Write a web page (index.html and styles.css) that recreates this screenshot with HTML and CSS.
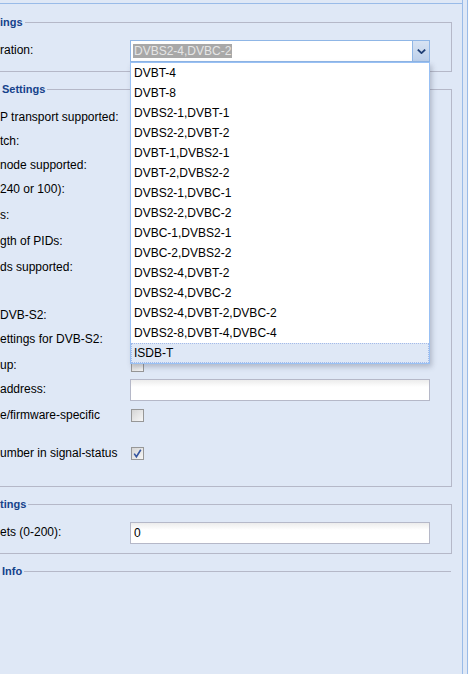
FILE: index.html
```html
<!DOCTYPE html>
<html>
<head>
<meta charset="utf-8">
<link rel="stylesheet" href="styles.css">
</head>
<body>
<div class="page">
  <div class="panel">
    <div class="panel-top"></div>
    <div class="panel-body">

      <div class="fs">
        <div class="fs-head"><span class="legend">ings</span><span class="rule"></span></div>
        <div class="fs-body pad-s">
          <div class="row tf">
            <div class="lbl">ration:</div>
            <div class="combo">
              <div class="combo-text"><span class="sel">DVBS2-4,DVBC-2</span></div>
              <div class="trigger">
                <svg width="9" height="5" viewBox="0 0 9 5"><path d="M0.8 0.6 L4.5 4.1 L8.2 0.6" fill="none" stroke="#1f3f75" stroke-width="1.8"/></svg>
              </div>
              <div class="list">
                <div class="opt">DVBT-4</div>
                <div class="opt">DVBT-8</div>
                <div class="opt">DVBS2-1,DVBT-1</div>
                <div class="opt">DVBS2-2,DVBT-2</div>
                <div class="opt">DVBT-1,DVBS2-1</div>
                <div class="opt">DVBT-2,DVBS2-2</div>
                <div class="opt">DVBS2-1,DVBC-1</div>
                <div class="opt">DVBS2-2,DVBC-2</div>
                <div class="opt">DVBC-1,DVBS2-1</div>
                <div class="opt">DVBC-2,DVBS2-2</div>
                <div class="opt">DVBS2-4,DVBT-2</div>
                <div class="opt">DVBS2-4,DVBC-2</div>
                <div class="opt">DVBS2-4,DVBT-2,DVBC-2</div>
                <div class="opt">DVBS2-8,DVBT-4,DVBC-4</div>
                <div class="opt hl">ISDB-T</div>
              </div>
            </div>
          </div>
        </div>
      </div>

      <div class="fs">
        <div class="fs-head"><span class="legend in2">Settings</span><span class="rule"></span></div>
        <div class="fs-body pad-l">
          <div class="row cb"><div class="lbl">P transport supported:</div><span class="chk"></span></div>
          <div class="row cb"><div class="lbl">tch:</div><span class="chk"></span></div>
          <div class="row cb"><div class="lbl">node supported:</div><span class="chk"></span></div>
          <div class="row tf"><div class="lbl">240 or 100):</div><input class="field" type="text"></div>
          <div class="row tf"><div class="lbl">s:</div><input class="field" type="text"></div>
          <div class="row tf"><div class="lbl">gth of PIDs:</div><input class="field" type="text"></div>
          <div class="row cb"><div class="lbl">ds supported:</div><span class="chk"></span></div>
          <div class="row cb"><div class="lbl"></div><span class="chk"></span></div>
          <div class="row cb"><div class="lbl">DVB-S2:</div><span class="chk"></span></div>
          <div class="row tf"><div class="lbl">ettings for DVB-S2:</div><input class="field" type="text"></div>
          <div class="row cb"><div class="lbl">up:</div><span class="chk"></span></div>
          <div class="row tf"><div class="lbl">address:</div><input class="field" type="text"></div>
          <div class="row cb tall"><div class="lbl">e/firmware-specific</div><span class="chk"></span></div>
          <div class="row cb"><div class="lbl">umber in signal-status</div>
            <span class="chk"><svg width="11" height="11" viewBox="0 0 11 11"><path d="M2.2 5.6 L4.4 8.8 L8.8 1.8" fill="none" stroke="#3656a0" stroke-width="1.6"/></svg></span>
          </div>
        </div>
      </div>

      <div class="fs">
        <div class="fs-head"><span class="legend">tings</span><span class="rule"></span></div>
        <div class="fs-body pad-s">
          <div class="row tf"><div class="lbl">ets (0-200):</div><input class="field" type="text" value="0"></div>
        </div>
      </div>

      <div class="fs">
        <div class="fs-head"><span class="legend in2">Info</span><span class="rule open"></span></div>
      </div>

    </div>
  </div>
  <div class="gutter"></div>
  <div class="edge"></div>
  <div class="rest"></div>
</div>
</body>
</html>
```

FILE: styles.css
```css
html, body {
  margin: 0;
  padding: 0;
}
body {
  font-family: "Liberation Sans", Arial, sans-serif;
  font-size: 12px;
  color: #000;
}
.page {
  display: flex;
  height: 674px;
  background: #dfe8f6;
  overflow: hidden;
}
.panel {
  width: 462px;
  border-right: 1px solid #99bbe8;
  display: flex;
  flex-direction: column;
}
.panel-top {
  height: 3px;
  border-bottom: 1px solid #99bbe8;
}
.panel-body {
  padding-top: 11px;
}
.gutter {
  width: 4px;
}
.edge {
  width: 1px;
  background: #99bbe8;
}
.rest {
  flex: 1;
  background: #fbfcfe;
}

/* fieldsets */
.fs {
  width: 452px;
  margin-bottom: 10px;
}
.fs-head {
  display: flex;
  height: 14px;
}
.legend {
  font-size: 11px;
  font-weight: bold;
  color: #15428b;
  line-height: 14px;
  padding-right: 2px;
  white-space: nowrap;
}
.legend.in2 {
  padding-left: 2px;
}
.rule {
  flex: 1;
  margin-top: 7px;
  border-top: 1px solid #b5b8c8;
  border-right: 1px solid #b5b8c8;
}
.rule.open {
  border-right: 0;
  margin-right: 1px;
}
.fs-body {
  border-right: 1px solid #b5b8c8;
  border-bottom: 1px solid #b5b8c8;
  padding-top: 11px;
}
.fs-body.pad-s {
  padding-bottom: 9px;
}
.fs-body.pad-l {
  padding-bottom: 23px;
}

/* rows */
.row {
  display: flex;
  margin-bottom: 4px;
}
.row:last-child {
  margin-bottom: 0;
}
.row.cb {
  height: 20px;
}
.row.tf {
  height: 22px;
}
.row.tall {
  height: 34px;
}
.lbl {
  width: 130px;
  flex: none;
  padding-top: 3px;
  line-height: 15px;
  white-space: nowrap;
  overflow: hidden;
}

/* controls */
.field {
  box-sizing: border-box;
  width: 300px;
  height: 22px;
  margin: 0;
  padding: 0 3px;
  border: 1px solid #b5b8c8;
  background: linear-gradient(#ececec 0, #ffffff 7px);
  font-family: "Liberation Sans", Arial, sans-serif;
  font-size: 12px;
  color: #000;
  outline: none;
}
.chk {
  box-sizing: border-box;
  width: 13px;
  height: 13px;
  margin: 4px 0 0 1px;
  border: 1px solid #979797;
  background: linear-gradient(135deg, #d5d5d5, #f7f7f7);
  display: flex;
  align-items: center;
  justify-content: center;
}
.combo {
  position: relative;
  box-sizing: border-box;
  width: 300px;
  height: 22px;
  border: 1px solid #8fb6e6;
  display: flex;
  background: #fff;
}
.combo-text {
  flex: 1;
  padding: 3px 0 0 2px;
  line-height: 14px;
  white-space: nowrap;
}
.sel {
  background: #a8a8a8;
  color: #e6e6e6;
  padding: 0 1px;
}
.trigger {
  width: 16px;
  border-left: 1px solid #8fb6e6;
  background: linear-gradient(#d7e3f3, #bdd0ea);
  display: flex;
  align-items: center;
  justify-content: center;
}
.list {
  position: absolute;
  top: 21px;
  left: -1px;
  box-sizing: border-box;
  width: 300px;
  background: #fff;
  border: 1px solid #98c0f4;
  box-shadow: 2px 3px 5px rgba(60, 70, 90, 0.28);
  z-index: 5;
}
.opt {
  box-sizing: border-box;
  height: 20px;
  padding: 2px 3px 2px 2px;
  border: 1px dotted transparent;
  line-height: 14px;
  white-space: nowrap;
}
.opt.hl {
  background: #dfe8f6;
  border-color: #a3bae9;
}
```
